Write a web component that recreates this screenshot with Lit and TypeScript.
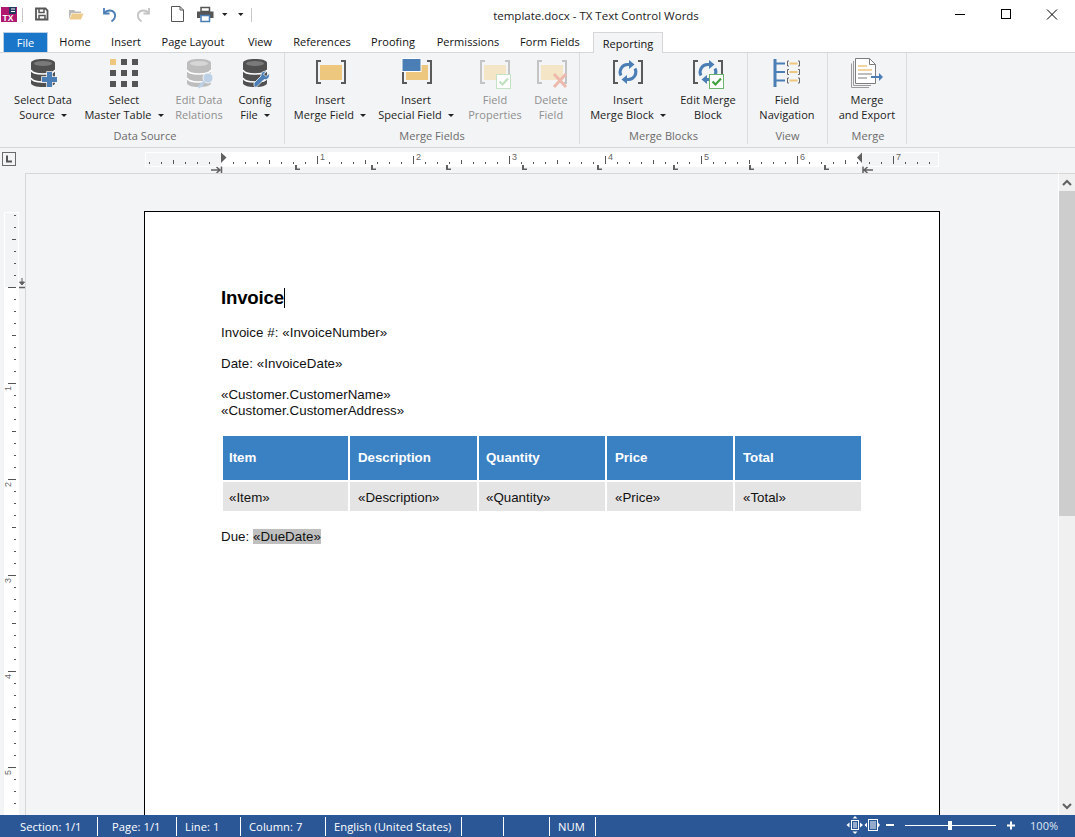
import { LitElement, html, svg, css, nothing } from "lit";
import { customElement } from "lit/decorators.js";
import { styleMap } from "lit/directives/style-map.js";

const BLUE = "#4a7eb5";
const GOLD = "#eec77f";
const DARK = "#5a5a5a";

const brackets = (c: string) => svg`<path d="M10 3H6V25H10M30 3H34V25H30" fill="none" stroke="${c}" stroke-width="2"/>`;
const db = (body: string, top: string) => svg`
  <path d="M8 5C8 2.500 13 1 20 1S32 2.500 32 5V25C32 27.500 27 29 20 29S8 27.500 8 25Z" fill="${body}"/>
  <ellipse cx="20" cy="5.500" rx="9" ry="2.500" fill="${top}"/>
  <path d="M8 12C9 15 14 16 20 16S31 15 32 12M8 20C9 23 14 24 20 24S31 23 32 20" fill="none" stroke="#fff" stroke-width="1.600"/>`;
const sync = (c: string) => svg`
  <path d="M13 17.500A7.500 7.500 0 0 1 20 6.500H22" fill="none" stroke="${c}" stroke-width="3"/>
  <path d="M21 2L26.500 6.500L21 11Z" fill="${c}"/>
  <path d="M27 10.500A7.500 7.500 0 0 1 20 21.500H18" fill="none" stroke="${c}" stroke-width="3"/>
  <path d="M19 17L13.500 21.500L19 26Z" fill="${c}"/>`;
const checkBox = (border: string, check: string) => svg`
  <rect x="21.500" y="16.500" width="14" height="14" fill="#fff" stroke="${border}"/>
  <path d="M24.500 23.500L27.500 26.500L33 20.500" fill="none" stroke="${check}" stroke-width="2.200"/>`;

const ICONS: Record<string, unknown> = {
  selectData: svg`${db("#505050", "#7a7a7a")}
    <path d="M24 14H29V19H34V24H29V29H24V24H19V19H24Z" fill="${BLUE}" stroke="#f3f4f6" stroke-width="1.500" paint-order="stroke"/>`,
  masterTable: svg`
    ${[0, 1, 2].map((r) => [0, 1, 2].map((c) => svg`<rect x="${6 + c * 11}" y="${1 + r * 11}" width="6" height="6" fill="${r === 0 && c === 0 ? GOLD : "#555"}"/>`))}`,
  relations: svg`${db("#bdbdbd", "#d6d6d6")}
    <circle cx="29" cy="20" r="5" fill="#bcd0e6" stroke="#f3f4f6"/>
    <path d="M25.500 23.500L19.500 29.500M21 26L23.500 28.500" stroke="#bcd0e6" stroke-width="2.500" fill="none"/>`,
  config: svg`${db("#505050", "#7a7a7a")}
    <path d="M34 15.500L31 18.500L28.500 16L31.500 13.500C28.500 12.500 25.500 14.500 26 18L19 25V27.500C19 28.500 20.500 29.500 21.500 29L29 21.500C32.500 22.500 35.500 19 34 15.500Z" fill="${BLUE}" stroke="#f3f4f6" stroke-width=".8"/>`,
  mergeField: svg`<g transform="translate(1 0)">${brackets(DARK)}<rect x="9" y="7" width="22" height="15" fill="${GOLD}"/></g>`,
  specialField: svg`<g transform="translate(1 0)">${brackets(DARK)}<rect x="9" y="7" width="22" height="15" fill="${GOLD}"/>
    <rect x="5" y="0.500" width="19" height="13" fill="${BLUE}" stroke="#fff"/></g>`,
  fieldProps: svg`${brackets("#c4c4c4")}<rect x="9" y="7" width="22" height="15" fill="#f3e5c6"/>${checkBox("#c4e2c4", "#bfe0bf")}`,
  deleteField: svg`<g transform="translate(1 0)">${brackets("#c4c4c4")}<rect x="9" y="7" width="22" height="15" fill="#f3e5c6"/>
    <path d="M22 16L34 29M34 16L22 29" stroke="#eeb9ad" stroke-width="3"/></g>`,
  mergeBlock: svg`${brackets(DARK)}${sync(BLUE)}`,
  editBlock: svg`${brackets(DARK)}${sync(BLUE)}${checkBox("#6db56d", "#3da13d")}`,
  navigation: svg`
    <path d="M8 1V29" stroke="${BLUE}" stroke-width="3"/>
    <path d="M8 5.500H18M8 14H18M8 22.500H18" stroke="${BLUE}" stroke-width="2"/>
    ${[5.5, 14, 22.5].map((y) => svg`
      <path d="M22 ${y - 2.5}H20.500V${y + 2.500}H22M31 ${y - 2.5}H32.500V${y + 2.500}H31" fill="none" stroke="#666"/>
      <path d="M22.500 ${y}H30.500" stroke="${GOLD}" stroke-width="2"/>`)}`,
  mergeExport: svg`
    <path d="M4.500 5.500V29.500H22" fill="none" stroke="#9a9a9a"/>
    <path d="M6.500 3V27.500H24" fill="none" stroke="#9a9a9a"/>
    <path d="M8.500 .5H22.500L28.500 6.500V25.500H8.500Z" fill="#fff" stroke="#7d7d7d"/>
    <path d="M22.500 .5V6.500H28.500" fill="none" stroke="#7d7d7d"/>
    <path d="M11 8H20M11 12H25" stroke="${GOLD}" stroke-width="1.500"/>
    <path d="M11 16H25M11 20H20" stroke="#a8a8a8" stroke-width="1.500"/>
    <path d="M24 19H33" stroke="${BLUE}" stroke-width="2"/><path d="M32 15L36 19L32 23Z" fill="${BLUE}"/>`,
};

interface Btn { icon: string; lines: string[]; w: number; off?: boolean; arrow?: boolean }
interface Group { name: string; w: number; pad: number; shift: number; btns: Btn[] }

const GROUPS: Group[] = [
  { name: "Data Source", w: 285, pad: 3, shift: 6, btns: [
    { icon: "selectData", lines: ["Select Data", "Source"], w: 80, arrow: true },
    { icon: "masterTable", lines: ["Select", "Master Table"], w: 82, arrow: true },
    { icon: "relations", lines: ["Edit Data", "Relations"], w: 68, off: true },
    { icon: "config", lines: ["Config", "File"], w: 44, arrow: true },
  ] },
  { name: "Merge Fields", w: 295, pad: 5, shift: 0, btns: [
    { icon: "mergeField", lines: ["Insert", "Merge Field"], w: 80, arrow: true },
    { icon: "specialField", lines: ["Insert", "Special Field"], w: 92, arrow: true },
    { icon: "fieldProps", lines: ["Field", "Properties"], w: 66, off: true },
    { icon: "deleteField", lines: ["Delete", "Field"], w: 46, off: true },
  ] },
  { name: "Merge Blocks", w: 168, pad: 4, shift: 0, btns: [
    { icon: "mergeBlock", lines: ["Insert", "Merge Block"], w: 88, arrow: true },
    { icon: "editBlock", lines: ["Edit Merge", "Block"], w: 72 },
  ] },
  { name: "View", w: 80, pad: 0, shift: 0, btns: [{ icon: "navigation", lines: ["Field", "Navigation"], w: 78 }] },
  { name: "Merge", w: 79, pad: 0, shift: 2, btns: [{ icon: "mergeExport", lines: ["Merge", "and Export"], w: 78 }] },
];

const TABS: [string, number][] = [["Home", 54], ["Insert", 48], ["Page Layout", 86], ["View", 48], ["References", 76], ["Proofing", 66], ["Permissions", 84], ["Form Fields", 80]];

const STATUS: [string, number, number][] = [
  ["Section: 1/1", 98, 20], ["Page: 1/1", 79, 14], ["Line: 1", 64, 8], ["Column: 7", 85, 8],
  ["English (United States)", 136, 8], ["", 42, 0], ["", 46, 0], ["NUM", 46, 8],
];

const hRuler = () => {
  const ticks = [];
  for (let x = 149; x <= 929; x += 12) {
    const k = (x - 221) / 12;
    if (k === 0) continue;
    const h = k % 8 === 0 ? 8 : k % 4 === 0 ? 4 : 2;
    const tx = x - 140;
    ticks.push(svg`<rect x="${tx}" y="${16 - h}" width="1" height="${h}" fill="#555"/>`);
    if (k % 8 === 0 && k > 0) ticks.push(svg`<text x="${tx + 3}" y="12" class="digit">${k / 8}</text>`);
  }
  const tabs = [295, 371, 446, 522, 597, 673, 749, 824].map((x) => svg`<path d="M${x - 140} 17H${x - 138}V20.500H${x - 135}V22H${x - 140}Z" fill="#606060"/>`);
  return svg`<svg class="hruler" width="810" height="25" viewBox="0 0 810 25">
    <rect x="5" y="4" width="794" height="15" fill="#fff"/>
    <rect x="6" y="5" width="75" height="13" fill="#f3f4f6"/>
    <rect x="722" y="5" width="76" height="13" fill="#f3f4f6"/>
    ${ticks}${tabs}
    <path d="M81 4.500L86.500 9.500L81 15Z" fill="#606060"/>
    <path d="M722 4.500L717 9.500L722 15Z" fill="#606060"/>
    <path d="M71 22H79.500M76.500 19L80 22L76.500 25M81.500 18.500V25" fill="none" stroke="#606060" stroke-width="1.500"/>
    <path d="M733 22H724.500M727.500 19L724 22L727.500 25M723 18.500V25" fill="none" stroke="#606060" stroke-width="1.500"/>
  </svg>`;
};

const vRuler = () => {
  const ticks = [];
  for (let y = 215; y <= 811; y += 12) {
    const k = (y - 287) / 12;
    const w = k % 8 === 0 ? 8 : k % 4 === 0 ? 4 : 2;
    ticks.push(svg`<rect x="${16 - w}" y="${y - 173}" width="${w}" height="1" fill="#555"/>`);
    if (k % 8 === 0 && k > 0) {
      const ly = y - 173 + 3;
      ticks.push(svg`<text transform="translate(11 ${ly}) rotate(-90)" text-anchor="end" class="digit">${k / 8}</text>`);
    }
  }
  return svg`<svg class="vruler" width="25" height="642" viewBox="0 0 25 642">
    <rect x="4" y="39" width="15" height="603" fill="#fff"/>
    <rect x="5" y="40" width="13" height="74" fill="#f3f4f6"/>
    ${ticks}
    <path d="M22 105V111M19.500 109L22 112L24.500 109Z" fill="#606060" stroke="#606060"/>
    <path d="M19 114.500H25" stroke="#606060" stroke-width="1.500"/>
  </svg>`;
};

const COLS = ["Item", "Description", "Quantity", "Price", "Total"];

@customElement("app-root")
export class AppRoot extends LitElement {
  static styles = css`
    :host { display: block; width: 1075px; height: 837px; overflow: hidden; background: #fff; font-family: "Open Sans", "Liberation Sans", sans-serif; font-size: 11px; letter-spacing: .05px; color: #1c1c1c; }
    .app { display: flex; flex-direction: column; height: 837px; }
    .title { display: flex; align-items: center; height: 30px; flex: none; }
    .qat { display: flex; align-items: center; width: 252px; flex: none; height: 30px; }
    .qat svg { display: block; }
    .caption { flex: 1; text-align: center; font-size: 11.5px; letter-spacing: 0; color: #222; }
    .winbtns { display: flex; width: 135px; flex: none; }
    .winbtns svg { width: 45px; height: 30px; display: block; }
    .tabs { display: flex; height: 23px; flex: none; padding-left: 3px; border-bottom: 1px solid #d6d6d6; box-sizing: border-box; }
    .tab { display: flex; align-items: center; justify-content: center; height: 22px; color: #111; box-sizing: border-box; padding-top: 1px; }
    .file { width: 45px; margin-top: 2px; height: 20px; background: #1a76c9; color: #fff; border: 1px solid #b9cfe6; border-bottom: none; padding: 0; }
    .active { width: 70px; margin-left: 3px; margin-top: 2px; height: 21px; background: #f3f4f6; border: 1px solid #d6d6d6; border-bottom: none; position: relative; }
    .ribbon { display: flex; height: 95px; flex: none; background: #f3f4f6; border-bottom: 1px solid #d6d6d6; box-sizing: border-box; }
    .group { display: flex; flex-direction: column; box-sizing: border-box; border-right: 1px solid #dcdcdc; margin-bottom: 3px; }
    .btns { display: flex; height: 75px; }
    .btn { display: flex; flex-direction: column; align-items: center; flex: none; padding-top: 5px; box-sizing: border-box; line-height: 15px; white-space: nowrap; color: #1c1c1c; }
    .btn svg.icon { width: 40px; height: 32px; flex: none; margin-bottom: 2px; overflow: visible; }
    .off { color: #8f8f8f; }
    .arrow { display: inline-block; width: 0; height: 0; border: 3px solid transparent; border-top: 3px solid #222; border-bottom: none; margin-left: 6px; vertical-align: 2px; }
    .gname { text-align: center; color: #6b6b6b; line-height: 15px; }
    .rulerrow { display: flex; height: 25px; flex: none; background: #f3f4f6; }
    .corner { width: 12px; height: 12px; margin: 4px 0 0 2px; border: 1px solid #6a6a6a; flex: none; position: relative; background: #f3f4f6; }
    .corner svg { display: block; }
    .hruler { display: block; margin-left: 124px; flex: none; overflow: hidden; }
    .digit { font: 9px "Liberation Sans", sans-serif; fill: #666; }
    .body { display: flex; height: 642px; flex: none; background: #f3f4f6; }
    .vruler { display: block; flex: none; }
    .canvas { flex: 1; border-left: 1px solid #d6d6d6; border-top: 1px solid #d6d6d6; padding: 37px 0 0 118px; overflow: hidden; box-sizing: border-box; min-width: 0; }
    .sbar { width: 17px; flex: none; display: flex; flex-direction: column; background: #f0f0f0; border-top: 1px solid #d6d6d6; box-sizing: border-box; border-left: 1px solid #fff; }
    .sbtn { height: 17px; flex: none; display: flex; align-items: center; justify-content: center; }
    .thumb { height: 325px; flex: none; background: #cdcdcd; }
    .track { flex: 1; }
    .page { width: 796px; height: 800px; box-sizing: border-box; background: #fff; border: 1px solid #000; padding: 75px 0 0 76px; font-family: "Liberation Sans", Arial, sans-serif; font-size: 13.33px; letter-spacing: 0; color: #111; }
    .line { height: 16px; line-height: 16px; white-space: nowrap; letter-spacing: .04px; }
    .h1 { height: 22px; line-height: 22px; font-size: 18.67px; font-weight: 700; color: #000; margin-bottom: 16px; display: flex; white-space: nowrap; letter-spacing: -.2px; }
    .caret { width: 1px; height: 20px; margin-top: 1px; background: #000; display: block; }
    .gap15 { margin-top: 15px; }
    .table { display: grid; grid-template-columns: 125px 127px 126px 126px 126px; grid-template-rows: 44px 29px; gap: 2px; margin: 17px 0 18px 2px; width: 638px; }
    .th { background: #3a81c4; color: #fff; font-weight: 700; display: flex; align-items: center; padding: 0 0 2px 8px; letter-spacing: -.05px; }
    .td { background: #e4e4e4; display: flex; align-items: center; padding: 2px 0 0 8px; }
    .th:nth-child(5n+1), .td:nth-child(5n+1) { padding-left: 6px; }
    .th:nth-child(5n+3), .td:nth-child(5n+3) { padding-left: 7px; }
    .hl { background: #bfbfbf; }
    .status { display: flex; height: 22px; flex: none; background: #2b5797; color: #fff; align-items: center; }
    .cell { height: 19px; box-sizing: border-box; border-right: 1px solid #fff; display: flex; align-items: center; white-space: nowrap; flex: none; font-size: 11.2px; }
    .zoom { display: block; margin-left: auto; flex: none; }
  `;

  private qat() {
    return svg`<svg width="252" height="30" viewBox="0 0 252 30">
      <rect x="1" y="7" width="16" height="15" fill="#b0176e"/>
      <path d="M9 7H16V14H9Z" fill="#23385f"/>
      <path d="M11 9H15M11 11.500H15" stroke="#fff" stroke-width="1"/>
      <text x="2.500" y="21" class="tx" font-family="Liberation Sans" font-weight="700" font-size="8.500" fill="#fff">TX</text>
      <path d="M22.500 8V22" stroke="#c8c8c8"/>
      <path d="M36 8.500H45.500L47.500 10.500V19.500H36Z" fill="none" stroke="#555" stroke-width="1.800"/>
      <path d="M39 8.500V12.500H44V8.500M39 19.500V15.500H45V19.500" fill="none" stroke="#555" stroke-width="1.500"/>
      <path d="M69 11V10H74L75.500 11.500H81V13H71.500L69 19Z" fill="#b9b9b9"/>
      <path d="M69.500 19L72 13.500H83.500L81 19.500H69.500Z" fill="#edcb8c"/>
      <path d="M104 8V13.500H109.500" fill="none" stroke="${BLUE}" stroke-width="1.800"/>
      <path d="M104.500 13C107 9.500 112.500 9.500 114.500 13C116 16 114.500 19.500 111.500 21.500" fill="none" stroke="${BLUE}" stroke-width="2"/>
      <path d="M149 8V13.500H143.500" fill="none" stroke="#c4c4c4" stroke-width="1.800"/>
      <path d="M148.500 13C146 9.500 140.500 9.500 138.500 13C137 16 138.500 19.500 141.500 21.500" fill="none" stroke="#c4c4c4" stroke-width="2"/>
      <path d="M171.500 6.500H180L183.500 10V21.500H171.500Z" fill="#fff" stroke="#555"/>
      <path d="M180 6.500V10H183.500" fill="none" stroke="#555"/>
      <path d="M201 7.500H209.500V11.500H201Z" fill="none" stroke="#555" stroke-width="1.500"/>
      <path d="M197 11.500H213.500V18H210V15.500H200.500V18H197Z" fill="#555"/>
      <path d="M201 15.500H209.500V21.500H201Z" fill="#fff" stroke="${BLUE}" stroke-width="1.500"/>
      <path d="M222 13H227.500L224.750 16Z" fill="#222"/>
      <path d="M238 13H243.500L240.750 16Z" fill="#222"/>
      <path d="M251.500 8V22" stroke="#c8c8c8"/>
    </svg>`;
  }

  private zoom() {
    return svg`<svg class="zoom" width="240" height="22" viewBox="835 815 240 22">
      <g fill="none" stroke="#fff">
        <rect x="851.500" y="820.500" width="7" height="9"/>
        <path d="M853 823H857M853 825H857M853 827H857"/>
        <rect x="868.500" y="819.500" width="9" height="11"/>
        <path d="M870 822H876M870 824H876M870 826H876M870 828H876"/>
      </g>
      <g fill="#fff">
        <path d="M855 816L857.500 818.500H852.500ZM855 834L857.500 831.500H852.500ZM846.500 825L849.500 822.500V827.500ZM863 825L860 822.500V827.500Z"/>
        <path d="M864.500 825L867 822.500V827.500ZM880 825L878 822.500V827.500Z"/>
        <rect x="886" y="824" width="8" height="2"/>
        <rect x="905" y="825" width="91" height="1"/>
        <rect x="948" y="821" width="4" height="9"/>
        <rect x="1007" y="824.500" width="8" height="2"/><rect x="1010" y="821.500" width="2" height="8"/>
      </g>
      <text x="1030" y="829.500" font-family="Open Sans" font-size="11" fill="#dfe7f2">100%</text>
    </svg>`;
  }

  render() {
    return html`<div class="app">
      <div class="title">
        <div class="qat">${this.qat()}</div>
        <div class="caption">template.docx - TX Text Control Words</div>
        <div class="winbtns">
          <svg viewBox="0 0 45 30"><path d="M15 14.500H25" stroke="#000"/></svg>
          <svg viewBox="0 0 45 30"><rect x="16.500" y="9.500" width="9" height="9" fill="none" stroke="#000"/></svg>
          <svg viewBox="0 0 45 30"><path d="M17 9.500L27 19.500M27 9.500L17 19.500" stroke="#000" fill="none"/></svg>
        </div>
      </div>
      <div class="tabs">
        <div class="tab file">File</div>
        ${TABS.map(([t, w]) => html`<div class="tab" style=${styleMap({ width: w + "px" })}>${t}</div>`)}
        <div class="tab active">Reporting</div>
      </div>
      <div class="ribbon">
        ${GROUPS.map((g) => html`<div class="group" style=${styleMap({ width: g.w + "px" })}>
          <div class="btns" style=${styleMap({ paddingLeft: g.pad + "px" })}>
            ${g.btns.map((b) => html`<div class="btn ${b.off ? "off" : ""}" style=${styleMap({ width: b.w + "px" })}>
              <svg class="icon" viewBox="0 0 40 32">${ICONS[b.icon]}</svg>
              <div>${b.lines[0]}</div>
              <div>${b.lines[1]}${b.arrow ? html`<span class="arrow"></span>` : nothing}</div>
            </div>`)}
          </div>
          <div class="gname" style=${styleMap({ paddingLeft: g.shift + "px" })}>${g.name}</div>
        </div>`)}
      </div>
      <div class="rulerrow">
        <div class="corner"><svg width="12" height="12" viewBox="0 0 12 12"><path d="M3 2.500H5V7.500H9V9.500H3Z" fill="#555"/></svg></div>
        ${hRuler()}
      </div>
      <div class="body">
        ${vRuler()}
        <div class="canvas">
          <div class="page">
            <div class="h1">Invoice<span class="caret"></span></div>
            <div class="line">Invoice #: «InvoiceNumber»</div>
            <div class="line gap15">Date: «InvoiceDate»</div>
            <div class="line gap15">«Customer.CustomerName»</div>
            <div class="line">«Customer.CustomerAddress»</div>
            <div class="table">
              ${COLS.map((c) => html`<div class="th">${c}</div>`)}
              ${COLS.map((c) => html`<div class="td">«${c}»</div>`)}
            </div>
            <div class="line">Due: <span class="hl">«DueDate»</span></div>
          </div>
        </div>
        <div class="sbar">
          <div class="sbtn"><svg width="10" height="7" viewBox="0 0 10 7"><path d="M1 6L5 2L9 6" fill="none" stroke="#606060" stroke-width="2"/></svg></div>
          <div class="thumb"></div>
          <div class="track"></div>
          <div class="sbtn"><svg width="10" height="7" viewBox="0 0 10 7"><path d="M1 1L5 5L9 1" fill="none" stroke="#606060" stroke-width="2"/></svg></div>
        </div>
      </div>
      <div class="status">
        ${STATUS.map(([t, w, p]) => html`<div class="cell" style=${styleMap({ width: w + "px", paddingLeft: p + "px" })}>${t}</div>`)}
        ${this.zoom()}
      </div>
    </div>`;
  }
}
